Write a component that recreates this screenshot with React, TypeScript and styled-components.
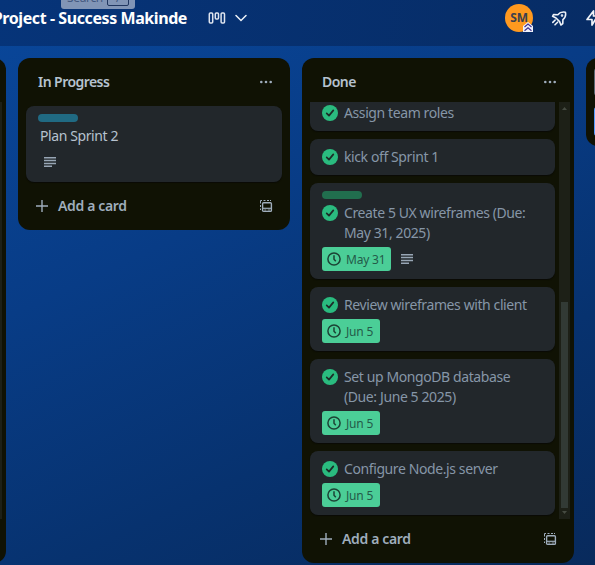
import React from "react";
import styled, { createGlobalStyle } from "styled-components";

const GlobalStyle = createGlobalStyle`
  * { box-sizing: border-box; }
  html, body { margin: 0; height: 100%; overflow: hidden; }
  body { font-family: "Noto Sans", "Open Sans", sans-serif; font-size: 14px; line-height: 20px; }
  svg { display: block; flex: none; }
`;

const Page = styled.div`
  position: relative;
  width: 595px;
  height: 565px;
  overflow: hidden;
  display: flex;
  flex-direction: column;
  background: linear-gradient(155deg, #09479b 0%, #083c86 38%, #07326f 70%, #082a5c 100%);
`;

const TopBar = styled.header`
  height: 46px;
  flex: none;
  display: flex;
  align-items: flex-start;
  padding: 4px 0 0;
  background: linear-gradient(100deg, #063479 0%, #072c65 100%);
  color: #fff;
`;

const BoardTitle = styled.h1`
  margin: 0 0 0 -9px;
  width: 196px;
  flex: none;
  display: flex;
  justify-content: flex-end;
  white-space: nowrap;
  font-size: 16px;
  line-height: 29px;
  font-weight: 700;
  letter-spacing: -0.42px;
`;

const TopIcons = styled.div<{ $left: number; $gap: number }>`
  display: flex;
  align-items: center;
  height: 28px;
  flex: none;
  margin-left: ${(p) => p.$left}px;
  gap: ${(p) => p.$gap}px;
`;

const Avatar = styled.div`
  position: relative;
  width: 28px;
  height: 28px;
  border-radius: 50%;
  background: #ff991f;
  color: #3b3f4d;
  font-size: 12px;
  line-height: 28px;
  font-weight: 700;
  letter-spacing: -0.3px;
  text-align: center;
`;

const AdminBadge = styled.svg`
  position: absolute;
  right: 0;
  bottom: 0;
`;

const SearchHint = styled.div`
  position: absolute;
  left: 61px;
  top: -14px;
  width: 74px;
  height: 23px;
  border-radius: 3px;
  background: #8195b6;
  color: #43587f;
  display: flex;
  align-items: center;
  padding: 0 6px;
  gap: 4px;
  font-size: 12px;
  line-height: 22px;
  letter-spacing: -0.35px;
`;

const HintKey = styled.span`
  width: 23px;
  height: 17px;
  border: 1px solid #20365f;
  border-radius: 2px;
  line-height: 16px;
  text-align: center;
`;

const Board = styled.main`
  display: flex;
  align-items: flex-start;
  gap: 12px;
  margin: 12px 0 0 -266px;
`;

const Column = styled.section<{ $height?: number }>`
  width: 272px;
  flex: none;
  height: ${(p) => (p.$height ? p.$height + "px" : "auto")};
  border-radius: 12px;
  background: #101204;
  padding-bottom: 8px;
  display: flex;
  flex-direction: column;
  color: #b6c2cf;
`;

const ColumnHeader = styled.header`
  height: 44px;
  flex: none;
  display: flex;
  align-items: center;
  justify-content: space-between;
  padding: 4px 17px 0 20px;
`;

const ColumnTitle = styled.h2`
  margin: 0;
  font-size: 14px;
  font-weight: 600;
  line-height: 20px;
  letter-spacing: -0.55px;
`;

const ListBody = styled.div<{ $scrolled?: boolean }>`
  flex: 1 1 auto;
  min-height: 0;
  display: flex;
  gap: 4px;
  overflow: hidden;
  padding: ${(p) => (p.$scrolled ? "0 4px 0 8px" : "4px 8px")};
`;

const Cards = styled.div<{ $scrolled?: boolean }>`
  flex: 1;
  display: flex;
  flex-direction: column;
  gap: 8px;
  margin-top: ${(p) => (p.$scrolled ? -7 : 0)}px;
`;

const CardBox = styled.article`
  flex: none;
  display: flex;
  flex-direction: column;
  gap: 4px;
  padding: 8px 12px;
  border-radius: 8px;
  background: #22272b;
  box-shadow: 0 1px 1px #0a0b06;
`;

const Label = styled.div<{ $color: string }>`
  width: 40px;
  height: 8px;
  border-radius: 4px;
  background: ${(p) => p.$color};
`;

const CardTitle = styled.div<{ $done?: boolean }>`
  display: flex;
  align-items: flex-start;
  gap: 6px;
  padding-left: ${(p) => (p.$done ? 0 : 2)}px;
  color: ${(p) => (p.$done ? "#8696a7" : "#b6c2cf")};
  letter-spacing: -0.4px;
  white-space: pre;

  svg { margin-top: 2px; }
`;

const Badges = styled.div`
  height: 24px;
  display: flex;
  align-items: center;
  gap: 10px;
`;

const DueBadge = styled.span`
  height: 24px;
  min-width: 58px;
  display: flex;
  align-items: center;
  gap: 5px;
  padding: 0 6px 0 5px;
  border-radius: 3px;
  background: #4bce97;
  color: #245b49;
  font-size: 12px;
  letter-spacing: -0.2px;
`;

const DueText = styled.span`
  padding-top: 2px;
`;

const DescIcon = styled.svg<{ $inset?: boolean }>`
  margin-left: ${(p) => (p.$inset ? 6 : 0)}px;
`;

const Footer = styled.footer`
  height: 32px;
  flex: none;
  margin-top: 4px;
  display: flex;
  align-items: center;
  padding: 0 17px;
  color: #9fadbc;
`;

const AddText = styled.span`
  flex: 1;
  padding-left: 9px;
  font-weight: 600;
  letter-spacing: -0.35px;
`;

const Track = styled.div`
  width: 11px;
  flex: none;
  display: flex;
  flex-direction: column;
  align-items: center;
  justify-content: space-between;
  padding: 5px 0;
  background: #1d2017;
`;

const Thumb = styled.div`
  width: 7px;
  height: 206px;
  margin: 192px 0 3px;
  background: #323a35;
`;

const SideColumn = styled(Column)`
  height: 88px;
  padding: 10px 8px;
  gap: 11px;
`;

const SideField = styled.div<{ $blue?: boolean }>`
  height: ${(p) => (p.$blue ? 30 : 28)}px;
  border-radius: 3px;
  background: ${(p) => (p.$blue ? "#579dff" : "#22272b")};
  border: ${(p) => (p.$blue ? "none" : "1px solid #596773")};
`;

const Dots = () => (
  <svg width="14" height="4" viewBox="0 0 14 4" fill="#9fadbc">
    <circle cx="2.3" cy="2" r="1.3" />
    <circle cx="7" cy="2" r="1.3" />
    <circle cx="11.7" cy="2" r="1.3" />
  </svg>
);

const Check = () => (
  <svg width="16" height="16" viewBox="0 0 16 16">
    <circle cx="8" cy="8" r="8" fill="#2abb7f" />
    <path d="M4.7 8.4 7 10.6 11.3 5.4" fill="none" stroke="#1d2c28" strokeWidth="1.7" strokeLinecap="round" strokeLinejoin="round" />
  </svg>
);

const Clock = () => (
  <svg width="14" height="14" viewBox="0 0 14 14" fill="none" stroke="#1c4335" strokeWidth="1.5">
    <circle cx="7" cy="7" r="6.1" />
    <path d="M7 3.2V7.3L8.8 9.2" />
  </svg>
);

const Description = ({ inset }: { inset?: boolean }) => (
  <DescIcon $inset={inset} width="12" height="10" viewBox="0 0 12 10" fill="#98a6b5">
    <path d="M0 0h12v1.6H0zM0 2.8h12v1.4H0zM0 5.8h12v1.4H0zM0 8.4h8V10H0z" />
  </DescIcon>
);

const Plus = () => (
  <svg width="14" height="14" viewBox="0 0 14 14" stroke="#9fadbc" strokeWidth="1.4">
    <path d="M7 1v12M1 7h12" />
  </svg>
);

const Template = () => (
  <svg width="14" height="14" viewBox="0 0 14 14" fill="none" stroke="#9fadbc">
    <path d="M1.5 11V9.5M1.5 8V6M1.5 4.5V1.5H3M4.5 1.5h2M8 1.5h2M11 1.5h1" strokeWidth="1" />
    <rect x="3.6" y="3.7" width="8.8" height="8.7" rx="1" strokeWidth="1.4" />
    <path d="M4 9.3h8" strokeWidth="1.2" />
    <path d="M5.3 11h2M8.7 11h2.5" strokeWidth="0.9" />
  </svg>
);

const Arrow = ({ down }: { down?: boolean }) => (
  <svg width="5" height="3" viewBox="0 0 5 3" fill="#464b42">
    <path d={down ? "M0 0h5L2.5 3z" : "M0 3h5L2.5 0z"} />
  </svg>
);

const Scrollbar = () => (
  <Track>
    <Arrow />
    <Thumb />
    <Arrow down />
  </Track>
);

const ListFooter = () => (
  <Footer>
    <Plus />
    <AddText>Add a card</AddText>
    <Template />
  </Footer>
);

type CardData = { title: string; label?: string; done?: boolean; due?: string; description?: boolean };

const Card = ({ title, label, done, due, description }: CardData) => (
  <CardBox>
    {label && <Label $color={label} />}
    <CardTitle $done={done}>
      {done && <Check />}
      <span>{title}</span>
    </CardTitle>
    {(due || description) && (
      <Badges>
        {due && (
          <DueBadge>
            <Clock />
            <DueText>{due}</DueText>
          </DueBadge>
        )}
        {description && <Description inset={!due} />}
      </Badges>
    )}
  </CardBox>
);

const doneCards: CardData[] = [
  { title: "Assign team roles", done: true },
  { title: "kick off Sprint 1", done: true },
  { title: "Create 5 UX wireframes (Due:\nMay 31, 2025)", label: "#216e4e", done: true, due: "May 31", description: true },
  { title: "Review wireframes with client", done: true, due: "Jun 5" },
  { title: "Set up MongoDB database\n(Due: June 5 2025)", done: true, due: "Jun 5" },
  { title: "Configure Node.js server", done: true, due: "Jun 5" },
];

export default function App() {
  return (
    <>
      <GlobalStyle />
      <Page>
        <TopBar>
          <BoardTitle>Project - Success Makinde</BoardTitle>
          <TopIcons $left={21} $gap={9}>
            <svg width="18" height="14" viewBox="0 0 18 14" fill="none" stroke="#dfe5ef" strokeWidth="1.5">
              <rect x="1.3" y="2" width="3.4" height="10" rx="1" />
              <rect x="7.3" y="2" width="3.2" height="6" rx="1" />
              <rect x="13.1" y="2" width="3.4" height="10" rx="1" />
            </svg>
            <svg width="12" height="8" viewBox="0 0 12 8" fill="none" stroke="#eef2f8" strokeWidth="1.5" strokeLinecap="round">
              <path d="m1 1.5 5 5 5-5" />
            </svg>
          </TopIcons>
          <TopIcons $left={258} $gap={18}>
            <Avatar>
              SM
              <AdminBadge width="10" height="10" viewBox="0 0 10 10" fill="none">
                <path d="M0 10V4l5-4 5 4v6z" fill="#f1f2fa" />
                <path d="m1.5 5 3.5-3 3.5 3M1.5 8.8 5 5.8l3.5 3" stroke="#403294" strokeWidth="1.2" />
              </AdminBadge>
            </Avatar>
            <svg width="16" height="18" viewBox="0 0 16 18" fill="none" stroke="#eef2f8" strokeWidth="1.6" strokeLinecap="round" strokeLinejoin="round">
              <path d="M14.4 3.2C10.9 2.6 8.5 3.6 6.8 5.7L2.5 5.5 1.6 7.3 5 9l3.6 3.6 1.3 3.4 1.9-1.4.1-4c2.3-1.7 3.2-4.2 2.5-7.4z" />
              <path d="M4.2 11 1.8 13.4M6.6 13.2 4 15.8" />
              <circle cx="11" cy="6.5" r=".5" />
            </svg>
            <svg width="14" height="16" viewBox="0 0 14 16" fill="none" stroke="#eef2f8" strokeWidth="1.7" strokeLinejoin="round">
              <path d="M8.5 1v5h4L7 15V9.5H2z" />
            </svg>
          </TopIcons>
        </TopBar>
        <SearchHint>
          Search
          <HintKey>/</HintKey>
        </SearchHint>
        <Board>
          <Column $height={505}>
            <ColumnHeader />
            <ListBody $scrolled>
              <Cards />
              <Scrollbar />
            </ListBody>
            <Footer />
          </Column>
          <Column>
            <ColumnHeader>
              <ColumnTitle>In Progress</ColumnTitle>
              <Dots />
            </ColumnHeader>
            <ListBody>
              <Cards>
                <Card title="Plan Sprint 2" label="#206a83" description />
              </Cards>
            </ListBody>
            <ListFooter />
          </Column>
          <Column $height={505}>
            <ColumnHeader>
              <ColumnTitle>Done</ColumnTitle>
              <Dots />
            </ColumnHeader>
            <ListBody $scrolled>
              <Cards $scrolled>
                {doneCards.map((card) => (
                  <Card key={card.title} {...card} />
                ))}
              </Cards>
              <Scrollbar />
            </ListBody>
            <ListFooter />
          </Column>
          <SideColumn>
            <SideField />
            <SideField $blue />
          </SideColumn>
        </Board>
      </Page>
    </>
  );
}
